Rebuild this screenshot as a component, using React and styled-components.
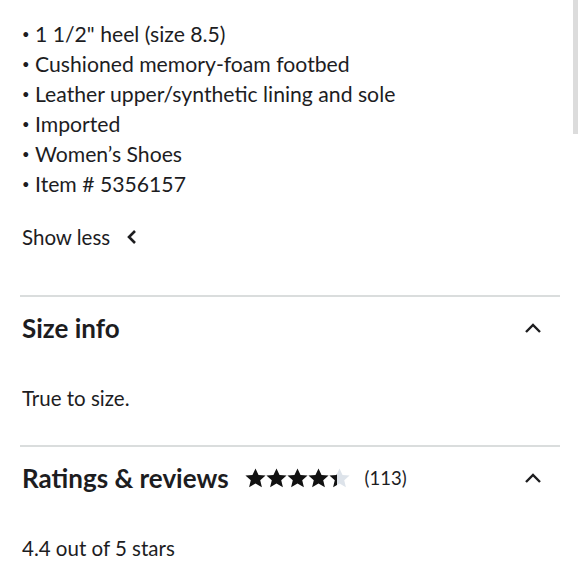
import styled, { createGlobalStyle } from 'styled-components';

const features = [
  '1 1/2" heel (size 8.5)',
  'Cushioned memory-foam footbed',
  'Leather upper/synthetic lining and sole',
  'Imported',
  'Women\u2019s Shoes',
  'Item # 5356157'
];

const GlobalStyle = createGlobalStyle`
  html, body {
    margin: 0;
    padding: 0;
    background: #fff;
  }
  body {
    font-family: Lato, 'Open Sans', sans-serif;
    color: #1d1d1f;
  }
`;

const ChevronLeft = () => (
  <svg width='12' height='16' viewBox='0 0 12 16'>
    <path d='M9 2 L3 8 L9 14' fill='none' stroke='#1d1d1f' strokeWidth='2.6' />
  </svg>
);

const ChevronUp = () => (
  <svg width='18' height='12' viewBox='0 0 18 12'>
    <path d='M2 10 L9 3 L16 10' fill='none' stroke='#1d1d1f' strokeWidth='2.4' />
  </svg>
);

const STAR =
  'M10 0.5 L12.9 6.6 L19.6 7.2 L14.5 11.6 L16.1 18.3 L10 14.8 L3.9 18.3 L5.5 11.6 L0.4 7.2 L7.1 6.6 Z';

const Star = ({ fill, id }) => (
  <svg width='21' height='20' viewBox='0 0 20 19'>
    <defs>
      <linearGradient id={id}>
        <stop offset={fill} stopColor='#111' />
        <stop offset={fill} stopColor='#dde3ea' />
      </linearGradient>
    </defs>
    <path d={STAR} fill={`url(#${id})`} />
  </svg>
);

const App = () => {
  const rating = 4.4;
  return (
    <Page>
      <GlobalStyle />
      <Scrollbar />
      <Features>
        {features.map((f) => (
          <li key={f}>{f}</li>
        ))}
      </Features>
      <ShowLess>
        <span>Show less</span>
        <ChevronLeft />
      </ShowLess>

      <Section>
        <Header>
          <Title>Size info</Title>
          <Toggle>
            <ChevronUp />
          </Toggle>
        </Header>
        <Body>True to size.</Body>
      </Section>

      <Section>
        <Header>
          <Title>Ratings &amp; reviews</Title>
          <Stars>
            {[0, 1, 2, 3, 4].map((i) => (
              <Star
                key={i}
                id={`star-${i}`}
                fill={Math.max(0, Math.min(1, rating - i))}
              />
            ))}
          </Stars>
          <Count>(113)</Count>
          <Toggle>
            <ChevronUp />
          </Toggle>
        </Header>
        <Body>4.4 out of 5 stars</Body>
      </Section>
    </Page>
  );
};

export default App;

const Page = styled.div`
  width: 580px;
  height: 580px;
  overflow: hidden;
  position: relative;
  box-sizing: border-box;
  padding: 19px 22px 0 22px;
`;

const Scrollbar = styled.div`
  position: absolute;
  top: 0;
  right: 2px;
  width: 5px;
  height: 134px;
  background: #dcdcdc;
`;

const Features = styled.ul`
  list-style: none;
  margin: 0;
  padding: 0;
  font-size: 21.2px;

  li {
    display: flex;
    align-items: center;
    height: 30px;
    white-space: pre;
  }

  li::before {
    content: '•';
    width: 13px;
    font-size: 13px;
    line-height: 1;
  }
`;

const ShowLess = styled.div`
  display: flex;
  align-items: center;
  gap: 16px;
  margin-top: 23px;
  height: 30px;
  font-size: 20.5px;
`;

const Section = styled.section`
  border-top: 2px solid #dadddd;
  margin: 0 -2px;
  padding: 0 2px;

  &:first-of-type {
    margin-top: 43px;
  }
`;

const Header = styled.div`
  display: flex;
  align-items: center;
  height: 62px;
`;

const Title = styled.h2`
  margin: 0;
  font-size: 26px;
  font-weight: 700;
`;

const Stars = styled.div`
  display: flex;
  margin-left: 16px;
`;

const Count = styled.span`
  margin-left: 15px;
  font-size: 18.5px;
`;

const Toggle = styled.div`
  margin-left: auto;
  margin-right: 16px;
  display: flex;
`;

const Body = styled.p`
  margin: 0;
  padding: 24px 0 32px;
  font-size: 20.5px;
  line-height: 30px;
`;
